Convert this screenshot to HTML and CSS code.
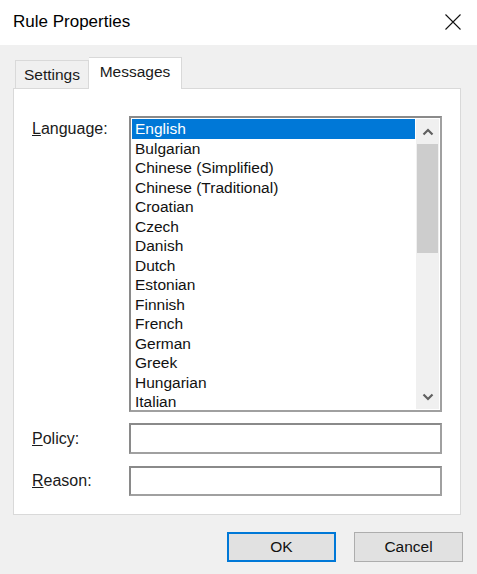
FILE: index.html
```html
<!DOCTYPE html>
<html>
<head>
<meta charset="utf-8">
<link rel="stylesheet" href="styles.css">
</head>
<body>
<div class="window">
  <div class="titlebar">
    <span class="title">Rule Properties</span>
    <svg class="close" width="16" height="16" viewBox="0 0 16 16"><path d="M0.5 0.5 L15.5 15.5 M15.5 0.5 L0.5 15.5" stroke="#111" stroke-width="1.1" fill="none"/></svg>
  </div>
  <div class="client">
    <div class="tabs">
      <div class="tab">Settings</div>
      <div class="tab active">Messages</div>
    </div>
    <div class="panel">
      <div class="form">
        <label class="lbl lbl-top"><u>L</u>anguage:</label>
        <div class="listbox">
          <div class="items">
            <div class="item selected">English</div>
            <div class="item">Bulgarian</div>
            <div class="item">Chinese (Simplified)</div>
            <div class="item">Chinese (Traditional)</div>
            <div class="item">Croatian</div>
            <div class="item">Czech</div>
            <div class="item">Danish</div>
            <div class="item">Dutch</div>
            <div class="item">Estonian</div>
            <div class="item">Finnish</div>
            <div class="item">French</div>
            <div class="item">German</div>
            <div class="item">Greek</div>
            <div class="item">Hungarian</div>
            <div class="item">Italian</div>
          </div>
          <div class="scrollbar">
            <div class="arrow"><svg width="12" height="8" viewBox="0 0 12 8"><path d="M1.5 6.5 L6 2 L10.5 6.5" stroke="#606060" stroke-width="2.2" fill="none"/></svg></div>
            <div class="track"><div class="thumb"></div></div>
            <div class="arrow"><svg width="12" height="8" viewBox="0 0 12 8"><path d="M1.5 1.5 L6 6 L10.5 1.5" stroke="#606060" stroke-width="2.2" fill="none"/></svg></div>
          </div>
        </div>
        <label class="lbl"><u>P</u>olicy:</label>
        <div class="input"></div>
        <label class="lbl"><u>R</u>eason:</label>
        <div class="input"></div>
      </div>
    </div>
    <div class="buttons">
      <button class="btn default">OK</button>
      <button class="btn">Cancel</button>
    </div>
  </div>
</div>
</body>
</html>
```
FILE: styles.css
```css
html, body {
  margin: 0;
  padding: 0;
}
body {
  width: 477px;
  height: 574px;
  overflow: hidden;
  font-family: "Liberation Sans", Arial, sans-serif;
  color: #000;
}
.window {
  width: 477px;
  height: 574px;
  display: flex;
  flex-direction: column;
  background: #f0f0f0;
}
.titlebar {
  height: 45px;
  background: #fff;
  display: flex;
  align-items: center;
  justify-content: space-between;
  padding: 0 16px 0 13px;
  flex: none;
}
.title {
  font-size: 17px;
  margin-top: -1px;
}
.close {
  display: block;
  margin-top: -2px;
}
.client {
  flex: 1;
  padding: 12px 16px 0 13px;
  display: flex;
  flex-direction: column;
}
.tabs {
  display: flex;
  align-items: flex-end;
  padding-left: 2px;
  height: 31px;
  position: relative;
  z-index: 1;
}
.tab {
  box-sizing: border-box;
  height: 28px;
  width: 74px;
  border: 1px solid #d9d9d9;
  border-bottom: none;
  background: #f0f0f0;
  font-size: 15.5px;
  text-align: center;
  line-height: 27px;
  color: #1a1a1a;
}
.tab.active {
  width: 93px;
  height: 32px;
  margin-bottom: -1px;
  background: #fff;
  line-height: 28px;
  border-left: none;
}
.panel {
  box-sizing: border-box;
  height: 427px;
  background: #fff;
  border: 1px solid #d9d9d9;
  padding: 27px 18px 0 18px;
}
.form {
  display: grid;
  grid-template-columns: 97px 313px;
  grid-template-rows: 296px 31px 31px;
  row-gap: 11px;
}
.form .input:last-child {
  margin-top: 1px;
}
.lbl {
  font-size: 16px;
  color: #1a1a1a;
  align-self: center;
}
.lbl-top {
  align-self: start;
  padding-top: 3px;
  line-height: 19.5px;
}
.listbox {
  box-sizing: border-box;
  border: 2px solid #a0a0a0;
  border-top-color: #8a8a8a;
  border-left-color: #8a8a8a;
  display: flex;
  padding: 1px 1px 0 1px;
  overflow: hidden;
}
.items {
  flex: 1;
  overflow: hidden;
}
.item {
  font-size: 15.5px;
  line-height: 19.5px;
  padding-left: 3px;
  color: #111;
  white-space: nowrap;
}
.item.selected {
  background: #0078d7;
  color: #fff;
}
.scrollbar {
  width: 23px;
  margin-left: 1px;
  background: #f0f0f0;
  display: flex;
  flex-direction: column;
  margin-bottom: 1px;
}
.arrow {
  height: 25px;
  display: flex;
  align-items: center;
  justify-content: center;
  flex: none;
}
.track {
  flex: 1;
}
.thumb {
  height: 109px;
  margin: 0 1px;
  background: #cdcdcd;
}
.input {
  box-sizing: border-box;
  border: 2px solid #a0a0a0;
  border-top-color: #8a8a8a;
  border-left-color: #8a8a8a;
  background: #fff;
}
.buttons {
  display: flex;
  justify-content: flex-end;
  gap: 18px;
  margin-top: 17px;
  margin-right: -2px;
}
.btn {
  box-sizing: border-box;
  width: 109px;
  height: 30px;
  background: #e1e1e1;
  border: 1px solid #adadad;
  font-family: "Liberation Sans", Arial, sans-serif;
  font-size: 15.5px;
  color: #111;
  padding: 0;
}
.btn.default {
  border: 2px solid #0078d7;
}
```
